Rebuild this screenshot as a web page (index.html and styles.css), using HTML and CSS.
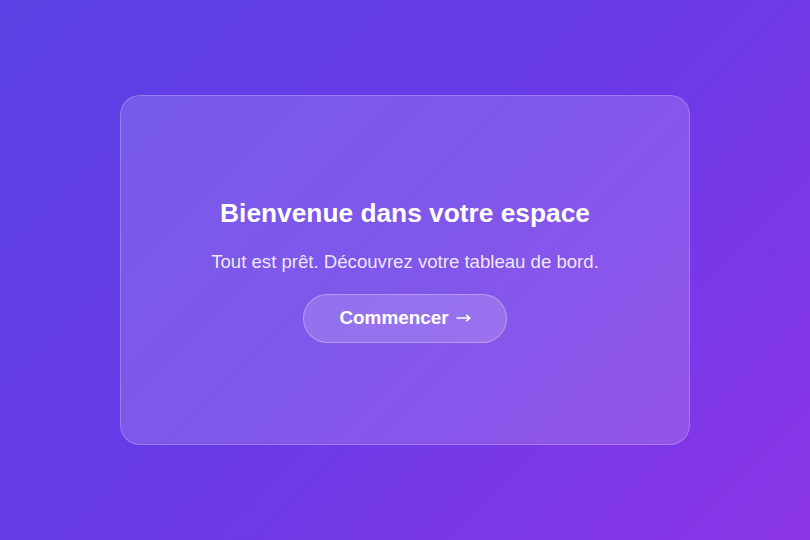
FILE: index.html
```html
<!DOCTYPE html>
<html lang="fr">
<head>
<meta charset="utf-8">
<title>Bienvenue</title>
<link rel="stylesheet" href="styles.css">
</head>
<body>
<main class="stage">
  <section class="card">
    <h1 class="title">Bienvenue dans votre espace</h1>
    <p class="subtitle">Tout est prêt. Découvrez votre tableau de bord.</p>
    <button class="cta">Commencer <svg class="arrow" width="15" height="10" viewBox="0 0 15 10" aria-hidden="true"><path d="M0.5 5H13.8M10.2 1.8L13.8 5L10.2 8.2" fill="none" stroke="#fff" stroke-width="1.6"/></svg></button>
  </section>
</main>
</body>
</html>
```

FILE: styles.css
```css
html, body {
  margin: 0;
  padding: 0;
  height: 100%;
}
body {
  font-family: "Liberation Sans", Arial, sans-serif;
  background: linear-gradient(135deg, #5a40e4 0%, #6a3ae8 50%, #8b35e5 100%);
  color: #fff;
}
.stage {
  height: 100%;
  display: flex;
  align-items: center;
  justify-content: center;
}
.card {
  box-sizing: border-box;
  width: 570px;
  height: 350px;
  border-radius: 20px;
  background: rgba(255, 255, 255, 0.15);
  border: 1px solid rgba(255, 255, 255, 0.22);
  display: flex;
  flex-direction: column;
  align-items: center;
  justify-content: center;
  padding-top: 2px;
}
.title {
  margin: 0;
  font-size: 26.3px;
  font-weight: 700;
  line-height: 26px;
}
.subtitle {
  margin: 25px 0 0;
  font-size: 18.6px;
  line-height: 22px;
  color: rgba(255, 255, 255, 0.88);
}
.cta {
  margin-top: 21px;
  box-sizing: border-box;
  width: 204px;
  height: 49px;
  border-radius: 999px;
  background: rgba(255, 255, 255, 0.16);
  border: 1px solid rgba(255, 255, 255, 0.3);
  color: #fff;
  font-family: inherit;
  font-size: 18.9px;
  font-weight: 700;
  cursor: pointer;
  display: flex;
  align-items: center;
  justify-content: center;
  gap: 7px;
  padding: 0;
}
.arrow {
  display: block;
}
```
